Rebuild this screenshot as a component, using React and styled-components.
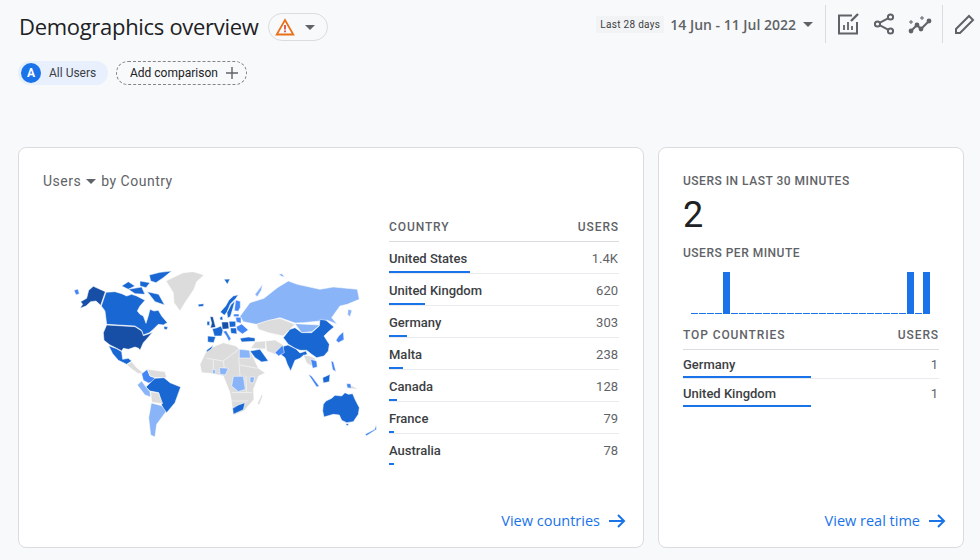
import React from 'react'
import styled, { createGlobalStyle } from 'styled-components'

const DARK = '#174ea6'
const MID = '#1967d2'
const MED = '#4285f4'
const LIGHT = '#8ab4f8'
const GRAY = '#dcdcdc'

const GlobalStyle = createGlobalStyle`
  html, body {
    margin: 0;
    padding: 0;
    width: 980px;
    height: 560px;
    overflow: hidden;
    background: #f8f9fa;
    font-family: Roboto, "Liberation Sans", sans-serif;
    color: #202124;
  }
`

const Page = styled.div`
  display: flex;
  flex-direction: column;
  width: 980px;
  height: 560px;
  box-sizing: border-box;
  padding: 0 16px 12px 18px;
`

const TopBar = styled.header`
  display: flex;
  justify-content: space-between;
  height: 44px;
  margin-right: -12px;
`

const TitleGroup = styled.div`
  display: flex;
  align-items: center;
  height: 54px;
  gap: 9px;
`

const Title = styled.h1`
  margin: -2px 0 0 1px;
  font-family: "Open Sans", sans-serif;
  font-weight: 400;
  font-size: 22px;
  letter-spacing: -0.3px;
  color: #202124;
`

const StatusPill = styled.div`
  display: flex;
  align-items: center;
  justify-content: space-between;
  width: 60px;
  height: 28px;
  box-sizing: border-box;
  padding: 0 12px 0 6px;
  border: 1px solid #dadce0;
  border-radius: 14px;
`

const Caret = styled.span`
  display: inline-block;
  width: 0;
  height: 0;
  border-left: 5.5px solid transparent;
  border-right: 5.5px solid transparent;
  border-top: 5.5px solid ${p => p.$color || '#5f6368'};
`

const Tools = styled.div`
  display: flex;
  align-items: center;
  height: 44px;
  margin-top: 2px;
`

const RangeTag = styled.span`
  padding: 3px 4px;
  background: #f1f3f4;
  font-size: 10px;
  letter-spacing: 0.3px;
  color: #3c4043;
`

const DateText = styled.span`
  margin: 0 7px 0 6px;
  font-family: "Open Sans", sans-serif;
  font-size: 14px;
  font-weight: 600;
  color: #5f6368;
`

const Divider = styled.span`
  width: 1px;
  height: 38px;
  margin-left: ${p => p.$left}px;
  background: #dadce0;
`

const ToolIcon = styled.svg`
  width: 24px;
  height: 24px;
  margin-left: ${p => p.$left}px;
  fill: none;
  stroke: #5f6368;
  stroke-width: 2;
`

const ChipRow = styled.div`
  display: flex;
  align-items: center;
  gap: 8px;
  margin-top: 17px;
  height: 24px;
`

const UserChip = styled.div`
  display: flex;
  align-items: center;
  width: 90px;
  height: 24px;
  box-sizing: border-box;
  padding-left: 3px;
  gap: 8px;
  border-radius: 12px;
  background: #e8f0fe;
  font-size: 12px;
  color: #3c4043;
`

const Avatar = styled.span`
  display: flex;
  align-items: center;
  justify-content: center;
  width: 20px;
  height: 20px;
  border-radius: 50%;
  background: #1a73e8;
  color: #fff;
  font-size: 12px;
  font-weight: 700;
`

const CompareChip = styled.div`
  display: flex;
  align-items: center;
  width: 131px;
  height: 24px;
  box-sizing: border-box;
  padding-left: 13px;
  gap: 8px;
  border: 1px dashed #80868b;
  border-radius: 12px;
  font-size: 12px;
  color: #202124;
`

const Cards = styled.main`
  display: flex;
  gap: 14px;
  margin-top: 62px;
  flex: 1;
`

const Card = styled.section`
  display: flex;
  flex-direction: column;
  box-sizing: border-box;
  width: ${p => p.$width}px;
  padding: 0 24px 17px;
  background: #fff;
  border: 1px solid #dadce0;
  border-radius: 8px;
`

const CardTitle = styled.div`
  display: flex;
  align-items: center;
  gap: 5px;
  height: 20px;
  margin-top: 23px;
  font-size: 14px;
  letter-spacing: 0.5px;
  color: #5f6368;
`

const CardBody = styled.div`
  display: flex;
  flex: 1;
  margin-top: 21px;
`

const MapBox = styled.div`
  width: 346px;
  flex: none;
`

const WorldMap = styled.svg`
  display: block;
  width: 320px;
  height: 190px;
  margin: 49px 0 0 17px;
  stroke: #fff;
  stroke-width: 1.6;
  stroke-linejoin: round;
`

const Table = styled.div`
  flex: 1;
  min-width: 0;
`

const HeadRow = styled.div`
  display: flex;
  justify-content: space-between;
  align-items: center;
  height: 30px;
  box-sizing: border-box;
  margin-top: ${p => p.$top || 0}px;
  border-bottom: 1px solid #dadce0;
  font-size: 12px;
  font-weight: 500;
  letter-spacing: 0.9px;
  color: #5f6368;
`

const Row = styled.div`
  position: relative;
  display: flex;
  justify-content: space-between;
  align-items: center;
  height: ${p => p.$height}px;
  box-sizing: border-box;
  padding-top: ${p => p.$pad || 0}px;
  border-bottom: 1px solid ${p => (p.$last ? 'transparent' : '#e8eaed')};
  font-size: 13px;
  color: #3c4043;
`

const Name = styled.span`
  font-weight: 500;
`

const Value = styled.span`
  margin-right: 1px;
  color: #5f6368;
`

const Bar = styled.span`
  position: absolute;
  left: 0;
  bottom: 0;
  height: 2px;
  background: #1a73e8;
`

const LinkRow = styled.a`
  display: flex;
  justify-content: flex-end;
  align-items: center;
  gap: 8px;
  margin-right: -7px;
  font-family: "Open Sans", sans-serif;
  font-size: 14.5px;
  color: #1a73e8;
`

const StatLabel = styled.div`
  margin-top: ${p => p.$top}px;
  height: 16px;
  line-height: 16px;
  font-size: 12px;
  font-weight: 500;
  letter-spacing: 0.5px;
  color: #5f6368;
`

const BigNumber = styled.div`
  height: 40px;
  margin-top: 6px;
  line-height: 40px;
  font-size: 36px;
  color: #202124;
`

const Chart = styled.div`
  display: flex;
  align-items: flex-end;
  gap: 1px;
  height: 42px;
  margin: 11px 0 0 8px;
`

const ChartBar = styled.span`
  width: 7px;
  height: ${p => (p.$on ? 42 : 1)}px;
  background: #1a73e8;
`

const Grow = styled.div`
  flex: 1;
`

const rows = [
  ['United States', '1.4K', 81],
  ['United Kingdom', '620', 36],
  ['Germany', '303', 18],
  ['Malta', '238', 14],
  ['Canada', '128', 8],
  ['France', '79', 5],
  ['Australia', '78', 5],
]

const minutes = Array.from({ length: 30 }, (_, i) => i === 4 || i === 27 || i === 29)

const Arrow = () => (
  <svg width="18" height="18" viewBox="0 0 18 18" fill="none" stroke="#1a73e8" strokeWidth="2">
    <path d="M1 9h15M10 3l6 6-6 6" />
  </svg>
)

// polygons are in 3x crop coordinates, hence the scale on each group
const WorldShapes = () => (
  <>
    <g transform="scale(.3333)">
      <polygon fill={DARK} points="62,122 80,112 86,88 100,76 136,92 122,133 108,120 92,122 78,135 60,142 68,130" />
      <polygon fill={MED} points="42,88 54,84 58,98 48,102" />
      <polygon fill={MID} points="138,94 165,92 185,98 200,105 215,100 230,105 240,110 255,118 240,135 232,150 240,160 250,165 258,187 265,165 270,145 282,150 295,148 305,165 322,185 310,192 295,190 280,205 268,215 250,222 245,208 225,195 140,190 135,150 124,135" />
      <polygon fill={MID} points="185,75 205,62 225,75 205,85" />
      <polygon fill={MID} points="205,85 245,78 255,100 225,98" />
      <polygon fill={MID} points="268,42 300,34 335,30 310,50 288,65 272,60" />
      <polygon fill={MID} points="240,60 270,65 258,80 240,75" />
      <polygon fill={MID} points="262,92 296,100 314,132 285,122" />
      <polygon fill={MID} points="312,196 324,198 320,206 312,204" />
      <polygon fill={GRAY} points="318,60 342,48 370,35 400,32 432,42 410,62 402,85 375,125 360,150 342,125 340,95" />
      <polygon fill={MID} points="414,130 432,128 430,136 416,137" />
      <polygon fill={DARK} points="130,215 140,192 225,197 245,210 250,224 268,218 278,214 262,232 250,245 240,268 236,262 225,258 205,265 190,262 185,270 170,262 150,252 132,238" />
      <polygon fill={MID} points="146,254 170,263 185,272 188,295 205,292 215,300 200,310 175,298 158,278" />
      <polygon fill={GRAY} points="200,311 216,302 228,318 240,328 250,336 236,338 215,324" />
      <polygon fill={MED} points="245,338 262,325 270,345 285,350 280,362 265,366 250,358" />
      <polygon fill={GRAY} points="262,325 315,332 320,350 285,350 270,345" />
      <polygon fill={MID} points="258,378 270,366 285,352 312,350 330,365 362,378 345,425 320,455 310,445 305,432 296,395 270,390" />
      <polygon fill={LIGHT} points="232,372 245,360 258,378 270,392 272,408 255,402" />
      <polygon fill={GRAY} points="272,392 296,396 308,428 275,424" />
      <polygon fill={LIGHT} points="274,426 305,434 318,452 290,490 285,528 272,522 266,470" />
    </g>
    <g transform="translate(140) scale(.3333)">
      <polygon fill={GRAY} points="0,310 22,265 70,245 108,255 118,265 150,268 175,322 196,336 176,345 160,385 162,415 132,450 100,462 95,425 90,395 70,345 30,337 5,335" />
      <path fill="none" d="M20,292 L70,300 116,265 M70,300 L76,342 M116,290 L120,345 M120,312 L172,322 M96,395 L156,395 M95,420 L145,420 M40,296 L40,336 M138,345 L140,395" />
      <polygon fill={LIGHT} points="118,265 148,268 152,291 118,291" />
      <polygon fill={LIGHT} points="100,346 130,346 136,385 115,392 95,375" />
      <polygon fill={LIGHT} points="58,320 85,322 76,342 60,340" />
      <polygon fill={LIGHT} points="150,348 164,348 160,366 150,364" />
      <polygon fill={LIGHT} points="38,326 46,326 46,338 38,338" />
      <polygon fill={MID} points="98,442 115,432 135,425 130,446 100,460" />
      <polygon fill={GRAY} points="172,428 186,398 188,405 178,432" />
      <polygon fill={MID} points="20,268 40,252 34,264 20,274" />
      <polygon fill={MID} points="72,55 90,54 82,70" />
      <polygon fill={LIGHT} points="120,166 150,125 192,112 232,80 265,60 292,70 360,85 400,78 472,85 478,115 442,130 420,135 395,170 412,190 382,178 310,185 285,186 240,170 205,180 170,190 130,182" />
      <polygon fill={LIGHT} points="165,100 188,70 184,88 172,108" />
      <polygon fill={LIGHT} points="236,40 246,38 254,48 244,46" />
      <polygon fill={GRAY} points="170,190 205,178 240,172 285,190 270,205 250,225 205,215 175,205" />
      <polygon fill={LIGHT} points="285,188 360,192 336,212 305,215" />
      <g transform="translate(15 75)">
        <polygon fill={MID} points="46,78 62,60 72,42 85,30 100,26 92,38 76,54 66,78 58,88" />
        <polygon fill={MID} points="66,80 78,56 90,44 84,66 76,92 68,96" />
        <polygon fill={MED} points="88,74 92,42 106,46 106,64 100,76" />
        <polygon fill={MID} points="44,95 52,90 54,102 46,102" />
        <polygon fill={DARK} points="15,92 24,92 32,124 16,126 20,112" />
        <polygon fill={MID} points="6,106 14,106 14,118 6,118" />
        <polygon fill={MID} points="22,128 34,126 48,120 54,132 50,150 28,150" />
        <polygon fill={DARK} points="50,108 70,108 72,128 52,130" />
        <polygon fill={MID} points="72,106 92,106 92,122 74,124" />
        <polygon fill={MID} points="8,150 32,152 26,170 8,168" />
        <polygon fill={MED} points="54,136 64,134 78,158 72,166 64,150" />
        <polygon fill={MID} points="76,126 94,126 96,144 78,142" />
        <polygon fill={MED} points="86,84 102,84 102,92 86,92" />
        <polygon fill={MED} points="92,94 108,94 108,112 94,108" />
        <polygon fill={MED} points="94,122 110,114 130,132 112,144 96,132" />
        <polygon fill={MID} points="105,157 130,153 150,156 150,166 110,168" />
      </g>
      <polygon fill={GRAY} points="166,242 197,240 197,264 152,262" />
      <polygon fill={GRAY} points="197,240 225,237 250,252 225,280 200,270" />
      <polygon fill={MID} points="250,230 270,205 285,200 305,215 335,215 358,195 360,175 378,178 402,198 385,212 372,225 388,250 385,270 372,285 350,290 335,280 320,268 300,268 285,262 265,250" />
      <polygon fill={MID} points="250,256 264,252 288,264 300,276 318,270 322,280 308,285 300,292 285,298 272,330 262,310 255,290 242,280" />
      <polygon fill={MED} points="225,275 248,252 253,275 236,285" />
      <polygon fill={MID} points="150,270 180,265 205,300 185,303 165,290" />
      <polygon fill={LIGHT} points="444,145 456,148 450,168 443,160" />
      <polygon fill={MED} points="416,225 430,212 432,236 415,245 408,238" />
      <polygon fill={GRAY} points="310,282 330,285 345,292 348,320 330,312 320,306" />
      <polygon fill={MED} points="332,295 350,300 352,318 338,322" />
      <polygon fill={MID} points="368,350 390,340 388,362 370,366" />
      <polygon fill={MED} points="325,340 335,345 358,376 350,378" />
      <polygon fill={MED} points="393,300 400,302 408,332 398,326" />
      <polygon fill={GRAY} points="440,365 475,385 440,382" />
      <polygon fill={MED} points="440,368 452,368 454,382 442,380" />
      <polygon fill={MID} points="368,450 370,430 378,420 395,412 405,403 425,405 435,395 445,400 458,398 465,415 478,440 475,460 460,482 440,485 425,478 418,462 400,460 372,468" />
      <polygon fill={MID} points="438,488 446,488 444,494 438,492" />
      <polygon fill={MED} points="495,520 524,505 528,492 530,505 500,524" />
    </g>
  </>
)

const App = () => (
  <Page>
    <GlobalStyle />
    <TopBar>
      <TitleGroup>
        <Title>Demographics overview</Title>
        <StatusPill>
          <svg width="20" height="18" viewBox="0 0 20 18" fill="none">
            <path d="M10 2L18.3 16.5H1.7Z" stroke="#e8711a" strokeWidth="1.8" strokeLinejoin="miter" />
            <path d="M10 7v4.5M10 12.6v1.6" stroke="#c5221f" strokeWidth="1.4" />
          </svg>
          <Caret />
        </StatusPill>
      </TitleGroup>
      <Tools>
        <RangeTag>Last 28 days</RangeTag>
        <DateText>14 Jun - 11 Jul 2022</DateText>
        <Caret />
        <Divider $left={12} />
        <ToolIcon $left={10} viewBox="0 0 24 24">
          <path d="M16 3.5H3V21.5H21V10" />
          <path d="M8 18v-5M12 18v-8M16 18v-4" strokeWidth="1.8" />
          <path d="M15 9l7-7" strokeWidth="2.4" />
        </ToolIcon>
        <ToolIcon $left={12} viewBox="0 0 24 24">
          <circle cx="18.5" cy="5" r="2.6" />
          <circle cx="5.5" cy="12" r="2.6" />
          <circle cx="18.5" cy="19" r="2.6" />
          <path d="M8 10.6l8-4.3M8 13.4l8 4.3" />
        </ToolIcon>
        <ToolIcon $left={12} viewBox="0 0 24 24">
          <path d="M3 19l6-6 4 4 8-8" />
          <circle cx="3" cy="19" r="1.4" fill="#5f6368" />
          <circle cx="9" cy="13" r="1.4" fill="#5f6368" />
          <circle cx="13" cy="17" r="1.4" fill="#5f6368" />
          <circle cx="21" cy="9" r="1.4" fill="#5f6368" />
          <path d="M3 8v4M1 10h4M14 4v4M12 6h4" strokeWidth="1" />
        </ToolIcon>
        <Divider $left={10} />
        <ToolIcon $left={9} viewBox="0 0 24 24">
          <path d="M4 21V17L17 4L21 8L8 21Z" />
        </ToolIcon>
      </Tools>
    </TopBar>
    <ChipRow>
      <UserChip>
        <Avatar>A</Avatar>
        All Users
      </UserChip>
      <CompareChip>
        Add comparison
        <svg width="12" height="12" viewBox="0 0 12 12" stroke="#5f6368" strokeWidth="1.4">
          <path d="M6 0v12M0 6h12" />
        </svg>
      </CompareChip>
    </ChipRow>
    <Cards>
      <Card $width={626}>
        <CardTitle>
          Users <Caret /> by Country
        </CardTitle>
        <CardBody>
          <MapBox>
            <WorldMap viewBox="0 0 320 190">
              <WorldShapes />
            </WorldMap>
          </MapBox>
          <Table>
            <HeadRow>
              <span>COUNTRY</span>
              <span>USERS</span>
            </HeadRow>
            {rows.map(([name, value, width], i) => (
              <Row key={name} $height={32} $pad={2} $last={i === rows.length - 1}>
                <Name>{name}</Name>
                <Value>{value}</Value>
                <Bar style={{ width }} />
              </Row>
            ))}
          </Table>
        </CardBody>
        <LinkRow>
          View countries <Arrow />
        </LinkRow>
      </Card>
      <Card $width={306}>
        <StatLabel $top={25}>USERS IN LAST 30 MINUTES</StatLabel>
        <BigNumber>2</BigNumber>
        <StatLabel $top={10}>USERS PER MINUTE</StatLabel>
        <Chart>
          {minutes.map((on, i) => (
            <ChartBar key={i} $on={on} />
          ))}
        </Chart>
        <HeadRow $top={6}>
          <span>TOP COUNTRIES</span>
          <span>USERS</span>
        </HeadRow>
        <Row $height={29}>
          <Name>Germany</Name>
          <Value>1</Value>
          <Bar style={{ width: 128 }} />
        </Row>
        <Row $height={29} $last>
          <Name>United Kingdom</Name>
          <Value>1</Value>
          <Bar style={{ width: 128 }} />
        </Row>
        <Grow />
        <LinkRow>
          View real time <Arrow />
        </LinkRow>
      </Card>
    </Cards>
  </Page>
)

export default App
